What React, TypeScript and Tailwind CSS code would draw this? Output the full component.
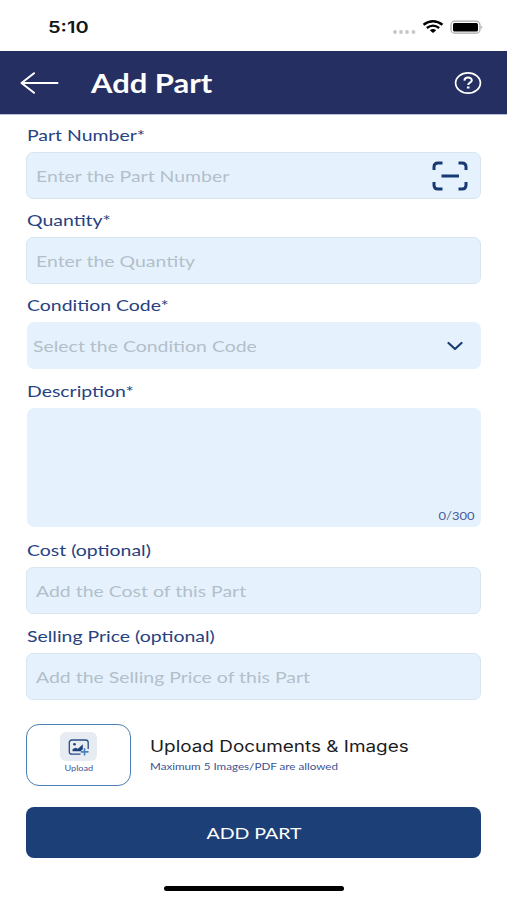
import type { ReactNode } from 'react';
import clsx from 'clsx';

interface FieldProps {
  label: string;
  className?: string;
  boxClassName?: string;
  children?: ReactNode;
}

function Field({ label, className, boxClassName, children }: FieldProps) {
  return (
    <div className={className}>
      <div className="flex h-[34px] items-center">
        <label className="ml-px origin-left scale-x-[1.215] whitespace-nowrap text-base text-[#27427f]">
          {label}
        </label>
      </div>
      <div className={clsx('flex rounded-[7px] bg-[#e5f2fe]', boxClassName)}>{children}</div>
    </div>
  );
}

function WideInput({ placeholder }: { placeholder: string }) {
  return (
    <input
      type="text"
      placeholder={placeholder}
      className="ml-px w-[280px] origin-left scale-x-[1.215] bg-transparent text-base text-[#27427f] outline-none placeholder:text-[#b3bfc9]"
    />
  );
}

const outlined = 'h-[47px] items-center border border-[#d8e6ef] pl-[8px]';

function StatusBar() {
  return (
    <div className="flex h-[51px] items-center justify-between pl-[48px] pr-[24px] pt-[3px]">
      <span className="origin-left scale-x-[1.25] font-['Inter'] text-[16px] font-semibold text-[#161616]">
        5:10
      </span>
      <svg width="92" height="16" viewBox="0 0 92 16">
        <g fill="#c6c6c6">
          <circle cx="4" cy="13" r="1.900" />
          <circle cx="10" cy="13" r="1.900" />
          <circle cx="16" cy="13" r="1.900" />
          <circle cx="22.500" cy="13" r="1.900" />
        </g>
        <g fill="none" stroke="#000" strokeWidth="2.300">
          <path d="M32.500 5.800Q42-1.200 51.500 5.800" />
          <path d="M35.800 9Q42 4.200 48.200 9" />
        </g>
        <path d="M38.800 11.200Q42 8.800 45.200 11.200L42 14Z" fill="#000" />
        <rect x="60" y="2.200" width="29" height="12" rx="3.800" fill="none" stroke="#a9a9a9" strokeWidth="1.200" />
        <rect x="62" y="4" width="25" height="8.500" rx="1.500" fill="#000" />
        <path d="M90.300 6.500Q92.200 8.200 90.300 10Z" fill="#a9a9a9" />
      </svg>
    </div>
  );
}

function Header() {
  return (
    <header className="flex h-16 items-center border-b border-[#b9bfdf] bg-[#252f61] pl-[20px] pr-[25px]">
      <svg width="39" height="22" viewBox="0 0 39 22" fill="none" stroke="#fff" strokeWidth="2" strokeLinecap="round" strokeLinejoin="round">
        <path d="M37.500 11H1.500M14 1.200L1.500 11L14 20.800" />
      </svg>
      <h1 className="ml-[32px] mt-[2px] origin-left scale-x-[1.19] text-[26px] font-bold text-white">Add Part</h1>
      <svg className="ml-auto" width="28" height="24" viewBox="0 0 28 24" fill="none" stroke="#fff">
        <ellipse cx="14" cy="12" rx="12.400" ry="10.200" strokeWidth="1.700" />
        <path d="M10.400 9.600C10.600 5.600 17.800 5.600 17.800 9.300C17.800 11.800 14.200 11.500 14.200 14" strokeWidth="2" />
        <path d="M14.200 15.500V17.500" strokeWidth="2.600" />
      </svg>
    </header>
  );
}

function ScanIcon() {
  return (
    <svg width="36" height="30" viewBox="0 0 36 30" fill="none" stroke="#183970" strokeWidth="3">
      <path d="M2 9V6Q2 2 6 2H10.500M26.500 2H30Q34 2 34 6V9M34 21V24Q34 28 30 28H26.500M10.500 28H6Q2 28 2 24V21M9.500 15H27" />
    </svg>
  );
}

function ImagePlusIcon() {
  return (
    <svg width="22" height="18" viewBox="0 0 22 18" fill="none">
      <path
        d="M12.500 16.200H4Q1.300 16.200 1.300 13.700V4.500Q1.300 2 4 2H17.500Q20.200 2 20.200 4.500V11"
        stroke="#2a4b87"
        strokeWidth="1.300"
      />
      <circle cx="6.500" cy="6.200" r="1.300" fill="#1d3f7b" />
      <path d="M4.500 13.300V11.200L7.500 9.800L10 10.800L14.800 6.200V11.200L12.500 13.300Z" fill="#1d3f7b" />
      <path d="M16.500 10.300V17.500M12.700 13.900H20.500" stroke="#4b82bd" strokeWidth="1.700" />
    </svg>
  );
}

export default function App() {
  return (
    <div className="flex h-[900px] w-[507px] flex-col overflow-hidden bg-white font-['Lato',sans-serif]">
      <StatusBar />
      <Header />
      <main className="flex flex-col px-[26px]">
        <Field label="Part Number*" className="mt-[3px]" boxClassName={clsx(outlined, 'justify-between pr-[12px]')}>
          <WideInput placeholder="Enter the Part Number" />
          <ScanIcon />
        </Field>
        <Field label="Quantity*" className="mt-1" boxClassName={outlined}>
          <WideInput placeholder="Enter the Quantity" />
        </Field>
        <Field label="Condition Code*" className="mt-1" boxClassName="ml-px h-[47px] items-center justify-between pl-[6px] pr-[18px]">
          <span className="origin-left scale-x-[1.215] text-base text-[#b3bfc9]">Select the Condition Code</span>
          <svg width="16" height="10" viewBox="0 0 16 10" fill="none" stroke="#1b3d73" strokeWidth="2.200" strokeLinecap="round" strokeLinejoin="round">
            <path d="M1.500 2L8 8L14.500 2" />
          </svg>
        </Field>
        <Field label="Description*" className="mt-[5px]" boxClassName="ml-px h-[119px] items-end justify-end pb-[3px] pr-[7px]">
          <span className="origin-right scale-x-[1.18] text-[11px] text-[#4a5a99]">0/300</span>
        </Field>
        <Field label="Cost (optional)" className="mt-[6px]" boxClassName={outlined}>
          <WideInput placeholder="Add the Cost of this Part" />
        </Field>
        <Field label="Selling Price (optional)" className="mt-[5px]" boxClassName={outlined}>
          <WideInput placeholder="Add the Selling Price of this Part" />
        </Field>

        <div className="mt-6 flex items-center">
          <button className="flex h-[62px] w-[105px] flex-col items-center rounded-[13px] border-[1.5px] border-[#4b7fb5] pt-[7px]">
            <span className="flex h-[29px] w-[37px] items-center justify-center rounded-[6px] bg-[#e7ecf3]">
              <ImagePlusIcon />
            </span>
            <span className="mt-[3px] scale-x-[1.22] text-[7.5px] leading-[10px] text-[#3f5596]">Upload</span>
          </button>
          <div className="ml-[19px] flex flex-col items-start">
            <span className="origin-left scale-x-[1.22] whitespace-nowrap font-['Inter'] text-[15.5px] leading-5 text-[#1c1c1c]">
              Upload Documents &amp; Images
            </span>
            <span className="mt-[2px] origin-left scale-x-[1.165] whitespace-nowrap text-[10px] leading-[14px] text-[#3b5293]">
              Maximum 5 Images/PDF are allowed
            </span>
          </div>
        </div>

        <button className="mt-[21px] flex h-[51px] items-center justify-center rounded-[8px] bg-[#1d3f77] text-white">
          <span className="scale-x-[1.22] text-base">ADD PART</span>
        </button>
      </main>
      <div className="mx-auto mt-[28px] h-[5px] w-[180px] rounded-full bg-black" />
    </div>
  );
}
